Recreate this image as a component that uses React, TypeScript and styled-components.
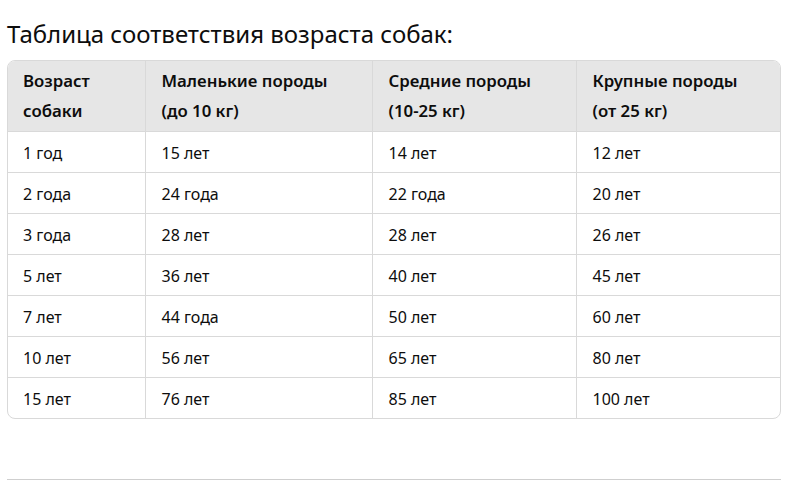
import React from "react";
import styled, { createGlobalStyle } from "styled-components";

const Global = createGlobalStyle`
  html, body { margin: 0; padding: 0; background: #ffffff; }
  body { font-family: "Segoe UI", "Noto Sans", "Open Sans", sans-serif; color: #0d0d0d; }
`;

const Page = styled.div`
  width: 792px;
  height: 480px;
  box-sizing: border-box;
  padding: 17px 11px 0 7px;
  display: flex;
  flex-direction: column;
  overflow: hidden;
`;

const Title = styled.h3`
  margin: 0 0 10px 0;
  font-size: 24px;
  line-height: 33px;
  font-weight: 400;
  color: #0d0d0d;
`;

const TableWrap = styled.div`
  border: 1px solid #d9d9d9;
  border-radius: 8px;
  overflow: hidden;
`;

const Table = styled.table`
  width: 100%;
  border-collapse: collapse;
  table-layout: fixed;
  font-size: 16px;
`;

const Col = styled.col<{ $w: number }>`
  width: ${(p) => p.$w}px;
`;

const Th = styled.th`
  background: #e6e6e6;
  text-align: left;
  font-weight: 600;
  font-size: 16.8px;
  line-height: 30px;
  padding: 5px 14px 5px 16px;
  border-left: 1px solid #d9d9d9;
  border-bottom: 1px solid #d9d9d9;
  vertical-align: top;
  white-space: nowrap;
  &:first-child { border-left: none; padding-left: 15px; }
`;

const Td = styled.td`
  line-height: 24px;
  padding: 9px 14px 7px 16px;
  border-left: 1px solid #d9d9d9;
  border-top: 1px solid #d9d9d9;
  white-space: nowrap;
  &:first-child { border-left: none; padding-left: 15px; }
`;

const Tr = styled.tr`
  &:first-child td { border-top: none; }
`;

const Rule = styled.hr`
  margin: 60px 0 0 0;
  border: none;
  border-top: 1px solid #cfcfcf;
`;

const rows = [
  ["1 год", "15 лет", "14 лет", "12 лет"],
  ["2 года", "24 года", "22 года", "20 лет"],
  ["3 года", "28 лет", "28 лет", "26 лет"],
  ["5 лет", "36 лет", "40 лет", "45 лет"],
  ["7 лет", "44 года", "50 лет", "60 лет"],
  ["10 лет", "56 лет", "65 лет", "80 лет"],
  ["15 лет", "76 лет", "85 лет", "100 лет"],
];

export default function App() {
  return (
    <Page>
      <Global />
      <Title>Таблица соответствия возраста собак:</Title>
      <TableWrap>
        <Table>
          <colgroup>
            <Col $w={137} />
            <Col $w={227} />
            <Col $w={204} />
            <Col $w={204} />
          </colgroup>
          <thead>
            <tr>
              <Th>Возраст<br />собаки</Th>
              <Th>Маленькие породы<br />(до 10 кг)</Th>
              <Th>Средние породы<br />(10-25 кг)</Th>
              <Th>Крупные породы<br />(от 25 кг)</Th>
            </tr>
          </thead>
          <tbody>
            {rows.map((r, i) => (
              <Tr key={i}>
                {r.map((c, j) => (
                  <Td key={j}>{c}</Td>
                ))}
              </Tr>
            ))}
          </tbody>
        </Table>
      </TableWrap>
      <Rule />
    </Page>
  );
}
